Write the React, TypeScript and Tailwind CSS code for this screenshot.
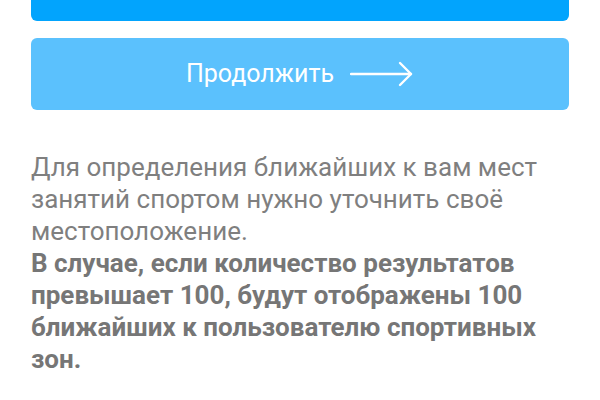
import React from "react";

// Location permission screen: action buttons followed by an explanation
function ArrowRight() {
  return (
    <svg width="64" height="26" viewBox="0 0 64 26" fill="none" className="shrink-0">
      <path d="M1 13h60" stroke="white" strokeWidth="2.4" strokeLinecap="round" />
      <path d="M50 2l11 11-11 11" stroke="white" strokeWidth="2.4" strokeLinecap="round" strokeLinejoin="round" />
    </svg>
  );
}

export default function App() {
  return (
    <div
      className="w-[600px] h-[400px] overflow-hidden bg-white flex flex-col px-[31px]"
      style={{ fontFamily: "Roboto, 'Noto Sans', sans-serif" }}
    >
      <div className="h-[21px] w-full shrink-0 rounded-b-[6px] bg-[#02a4fd]" />

      <button className="mt-[17px] h-[72px] w-full shrink-0 rounded-[6px] bg-[#5bc1fd] flex items-center justify-center gap-[16px] text-white text-[25px]">
        <span>Продолжить</span>
        <ArrowRight />
      </button>

      <div className="mt-[41px] text-[26px] leading-[32px] text-[#7f7f7f]">
        <p>
          Для определения ближайших к вам мест занятий спортом нужно уточнить своё местоположение.
        </p>
        <p className="font-bold text-[#767676]">
          В случае, если количество результатов превышает 100, будут отображены 100 ближайших к пользователю спортивных зон.
        </p>
      </div>
    </div>
  );
}
